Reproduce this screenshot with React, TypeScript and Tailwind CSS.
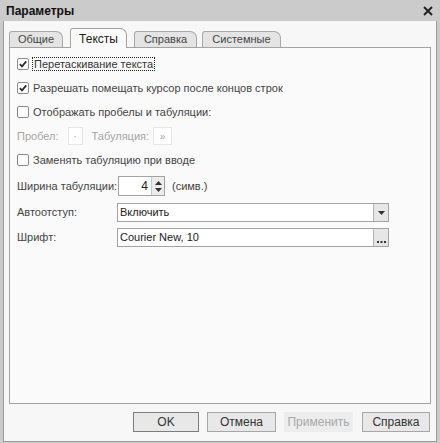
import React from 'react';

const Check: React.FC<{ checked?: boolean }> = ({ checked }) => (
  <span className="w-[12px] h-[12px] rounded-[2px] border border-[#8c8c8c] bg-white flex items-center justify-center shrink-0">
    {checked && (
      <svg width="10" height="10" viewBox="0 0 10 10">
        <path d="M1.8 5.2 L4 7.4 L8.3 2.4" fill="none" stroke="#2a2a2a" strokeWidth="1.7" />
      </svg>
    )}
  </span>
);

const Tab: React.FC<{ label: string; active?: boolean; className: string }> = ({ label, active, className }) =>
  active ? (
    <div className={`h-[20px] -mb-px bg-[#fafafa] border border-b-0 border-[#a3a3a3] rounded-tl-[3px] rounded-tr-[7px] flex items-center justify-center text-[12px] text-[#222] ${className}`}>
      {label}
    </div>
  ) : (
    <div className={`h-[16px] bg-[#e4e4e4] border border-b-0 border-[#a8a8a8] rounded-tl-[3px] rounded-tr-[7px] flex items-center justify-center text-[#444] ${className}`}>
      {label}
    </div>
  );

export default function App() {
  return (
    <div
      className="w-[440px] h-[443px] bg-[#cbcbcb] flex flex-col text-[11px] text-[#444] whitespace-nowrap"
      style={{ fontFamily: '"Liberation Sans", Arial, sans-serif' }}
    >
      {/* Title */}
      <div className="h-[21px] flex items-center justify-between pl-[6px] pr-[7px] shrink-0">
        <span className="text-[12px] font-bold text-[#111]">Параметры</span>
        <svg width="10" height="10" viewBox="0 0 10 10">
          <path d="M1 1 L9 9 M9 1 L1 9" stroke="#222" strokeWidth="2" />
        </svg>
      </div>

      {/* Body */}
      <div className="flex-1 mx-[3px] mb-[1px] bg-[#f7f7f7] border border-t-0 border-[#9c9c9c] flex flex-col px-[5px]">
        {/* Tabs */}
        <div className="flex items-end pt-[7px] relative z-10">
          <Tab label="Общие" className="w-[54px]" />
          <Tab label="Тексты" active className="w-[57px] ml-[7px]" />
          <Tab label="Справка" className="w-[63px] ml-[7px]" />
          <Tab label="Системные" className="w-[79px] ml-[5px]" />
        </div>

        {/* Panel */}
        <div className="flex-1 bg-[#fafafa] border border-[#a3a3a3] flex flex-col pl-[7px] pt-[4px]">
          <div className="h-[24px] flex items-center gap-[3px]">
            <Check checked />
            <span className="border border-dotted border-[#222] px-[1px] leading-[12px] text-[#333]">Перетаскивание текста</span>
          </div>
          <div className="h-[24px] flex items-center gap-[4px]">
            <Check checked />
            <span>Разрешать помещать курсор после концов строк</span>
          </div>
          <div className="h-[24px] flex items-center gap-[4px]">
            <Check />
            <span>Отображать пробелы и табуляции:</span>
          </div>
          <div className="h-[24px] flex items-center text-[#a6a6a6]">
            <span>Пробел:</span>
            <span className="ml-[9px] w-[15px] h-[18px] border border-[#e6e6e6] bg-white flex items-center justify-center">·</span>
            <span className="ml-[9px]">Табуляция:</span>
            <span className="ml-[4px] w-[19px] h-[18px] border border-[#e6e6e6] bg-white flex items-center justify-center text-[10px]">»</span>
          </div>
          <div className="h-[24px] flex items-center gap-[4px]">
            <Check />
            <span>Заменять табуляцию при вводе</span>
          </div>

          <div className="h-[20px] mt-[4px] flex items-center">
            <span className="w-[101px]">Ширина табуляции:</span>
            <div className="w-[47px] h-[20px] border border-[#a3a3a3] bg-white flex">
              <span className="flex-1 flex items-center justify-end pr-[3px] text-[12px] text-[#222]">4</span>
              <div className="w-[13px] bg-[#ececec] border-l border-[#c8c8c8] flex flex-col items-center justify-center gap-[3px]">
                <svg width="7" height="4" viewBox="0 0 7 4"><path d="M0 4 L3.5 0 L7 4 Z" fill="#333" /></svg>
                <svg width="7" height="4" viewBox="0 0 7 4"><path d="M0 0 L3.5 4 L7 0 Z" fill="#333" /></svg>
              </div>
            </div>
            <span className="ml-[7px]">(симв.)</span>
          </div>

          <div className="h-[19px] mt-[7px] flex items-center">
            <span className="w-[100px]">Автоотступ:</span>
            <div className="w-[272px] h-[19px] border border-[#a3a3a3] bg-white flex">
              <span className="flex-1 flex items-center pl-[2px] text-[#222]">Включить</span>
              <div className="w-[15px] bg-[#e6e6e6] border-l border-[#b5b5b5] flex items-center justify-center">
                <svg width="7" height="4" viewBox="0 0 7 4"><path d="M0 0 L3.5 4 L7 0 Z" fill="#333" /></svg>
              </div>
            </div>
          </div>

          <div className="h-[19px] mt-[6px] flex items-center">
            <span className="w-[100px]">Шрифт:</span>
            <div className="w-[272px] h-[19px] border border-[#a3a3a3] bg-white flex">
              <span className="flex-1 flex items-center pl-[2px] text-[#222]">Courier New, 10</span>
              <div className="w-[15px] bg-[#e6e6e6] border-l border-[#b5b5b5] flex items-end justify-center pb-[3px]">
                <svg width="9" height="2" viewBox="0 0 9 2">
                  <rect x="0" y="0" width="2" height="2" fill="#333" />
                  <rect x="3.5" y="0" width="2" height="2" fill="#333" />
                  <rect x="7" y="0" width="2" height="2" fill="#333" />
                </svg>
              </div>
            </div>
          </div>
        </div>

        {/* Buttons */}
        <div className="flex justify-end mt-[8px] mb-[9px] pr-[1px] h-[20px] text-[12px]">
          <button className="w-[66px] h-[20px] bg-[#e8e8e8] border border-[#7d7d7d] text-[#333]">OK</button>
          <button className="w-[69px] h-[20px] ml-[8px] bg-[#e8e8e8] border border-[#a6a6a6] text-[#333]">Отмена</button>
          <button className="w-[69px] h-[20px] ml-[8px] bg-[#ededed] border border-[#ededed] text-[#a8a8a8]">Применить</button>
          <button className="w-[68px] h-[20px] ml-[9px] bg-[#e8e8e8] border border-[#a6a6a6] text-[#333]">Справка</button>
        </div>
      </div>
    </div>
  );
}
